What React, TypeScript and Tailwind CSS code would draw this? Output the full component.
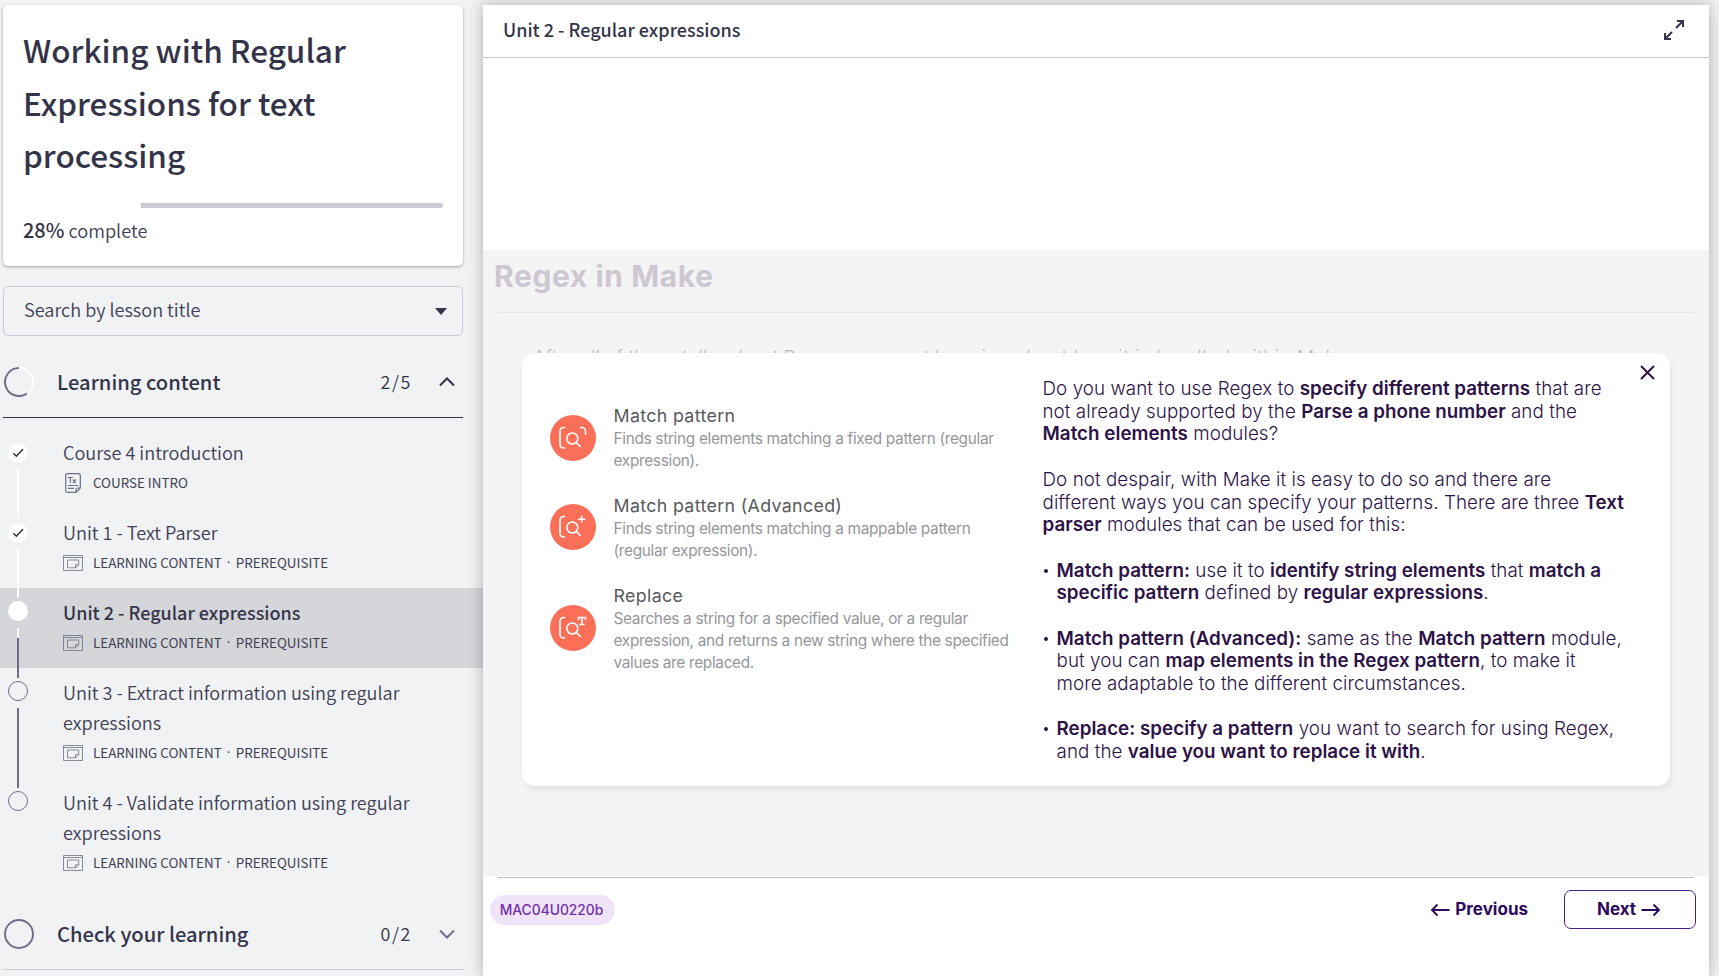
import React from "react";

const cjk = "font-['Noto_Sans_CJK_SC',sans-serif]";

function WindowIcon() {
  return (
    <svg className="block h-4 w-5" viewBox="0 0 20 16" fill="none" stroke="#6d7086" strokeWidth="1">
      <path d="M.5.5h19v15H.5zM.5 2.5h19M4.500 5h11.200v4.800l-3 3H4.500zM12.500 12.800v-3h3" opacity=".8" />
    </svg>
  );
}

function TextDocIcon() {
  return (
    <svg className="block h-5 w-5" viewBox="0 0 20 20" fill="none" stroke="#6d7086" strokeWidth="1.200">
      <path d="M13 19.300H4.200a1.500 1.500 0 0 1-1.500-1.500V2.200A1.500 1.500 0 0 1 4.200.700h11.600a1.500 1.500 0 0 1 1.500 1.500V15zM13 19.300v-2.800q0-1.500 1.500-1.500h2.800M5 12.500h10M5 15.300h6M4.800 4.500h5M7.300 4.500v5.500M9.800 6.500l3 3.500M12.800 6.500l-3 3.500" />
    </svg>
  );
}

function CheckDot() {
  return (
    <div className="flex h-5 w-5 items-center justify-center rounded-full bg-white">
      <svg className="h-3 w-3" viewBox="0 0 12 12" fill="none" stroke="#2f2f38" strokeWidth="1.500">
        <path d="M1.300 6.300l3 3L11 2.300" />
      </svg>
    </div>
  );
}

function Chevron({ up = false }: { up?: boolean }) {
  return (
    <svg className="h-5 w-5" viewBox="0 0 20 20" fill="none" stroke={up ? "#33344a" : "#6d7086"} strokeWidth="2">
      <path d={up ? "M3 13.500l7-7 7 7" : "M3 6.500l7 7 7-7"} />
    </svg>
  );
}

type LessonProps = {
  title: React.ReactNode;
  kind: string[];
  icon?: React.ReactNode;
  marker: React.ReactNode;
  active?: boolean;
  tall?: boolean;
};

function Lesson({ title, kind, icon, marker, active, tall }: LessonProps) {
  return (
    <div className={`flex w-[483px] shrink-0 ${tall ? "h-[110px]" : "h-20"} ${active ? "bg-[#d5d6da]" : ""}`}>
      <div className="w-[63px] shrink-0 pl-2">{marker}</div>
      <div className="pt-[9px]">
        <div className={`whitespace-nowrap leading-[30px] ${active ? "text-[18px] font-medium text-[#33344a]" : "text-[18.100px] font-[350] text-[#3d3f55]"}`}>{title}</div>
        <div className="flex h-[30px] items-center">
          <div className="w-[30px] pt-px">{icon ?? <WindowIcon />}</div>
          <div className="flex text-[13.400px] leading-[30px] whitespace-nowrap text-[#3d3f55]">
            {kind.map((k, i) => (
              <React.Fragment key={k}>
                {i > 0 && <span className="w-[14px] text-center font-['Noto_Sans',sans-serif]">·</span>}
                <span>{k}</span>
              </React.Fragment>
            ))}
          </div>
        </div>
      </div>
    </div>
  );
}

const prerequisite = ["LEARNING CONTENT", "PREREQUISITE"];

function Sidebar() {
  return (
    <aside className={`flex h-[976px] w-[483px] shrink-0 flex-col overflow-hidden pt-[5px] text-[#33344a] ${cjk}`}>
      <div className="ml-[3px] h-[261px] w-[460px] shrink-0 rounded-[5px] bg-white px-5 pt-[18px] shadow-[0_1px_3px_rgba(0,0,0,0.35)]">
        <h1 className="text-[31.500px] leading-[52.500px] font-medium whitespace-nowrap">
          Working with Regular
          <br />
          Expressions for text
          <br />
          processing
        </h1>
        <div className="mt-[22px] flex h-[5px] w-[420px]">
          <div className="w-[118px]" />
          <div className="flex-1 rounded-r-full bg-[#c9cad5]" />
        </div>
        <div className="mt-[7px] text-[18.200px] leading-[30px] font-[350] text-[#3d3f55]">
          <span className="text-[19.900px] font-medium text-[#33344a]">28%</span> complete
        </div>
      </div>
      <div className="mt-5 ml-[3px] flex h-[50px] w-[460px] shrink-0 items-center justify-between rounded-[5px] border border-[#c9cad5] pr-[15px] pl-5">
        <span className="pb-[3px] text-[18.100px] font-[350] text-[#3d3f55]">Search by lesson title</span>
        <svg className="h-[7px] w-3" viewBox="0 0 12 7" fill="#33344a">
          <path d="M0 0h12L6 7z" />
        </svg>
      </div>
      <div className="ml-[3px] flex h-[82px] w-[460px] shrink-0 items-center border-b border-[#33344a] pt-[10px]">
        <svg className="mr-[23px] ml-px h-[30px] w-[30px]" viewBox="0 0 30 30" fill="none" strokeWidth="2">
          <circle cx="15" cy="15" r="14" stroke="#fff" />
          <path d="M15 1a14 14 0 1 0 8 25.500" stroke="#6d7086" />
        </svg>
        <span className="flex-1 pt-px text-[20.150px] font-medium">Learning content</span>
        <span className="mr-[25px] text-[17.900px] font-[350] tracking-[1.600px]">2/5</span>
        <span className="mr-[6px]"><Chevron up /></span>
      </div>
      <div className="h-[10px] shrink-0" />
      <Lesson
        title="Course 4 introduction"
        kind={["COURSE INTRO"]}
        icon={<TextDocIcon />}
        marker={
          <div className="flex w-5 flex-col items-center pt-[15px]">
            <CheckDot />
            <div className="mt-[5px] h-[50px] w-[2px] bg-white" />
          </div>
        }
      />
      <Lesson
        title="Unit 1 - Text Parser"
        kind={prerequisite}
        marker={
          <div className="flex w-5 flex-col items-center pt-[15px]">
            <CheckDot />
            <div className="mt-[5px] h-[40px] w-[2px] bg-white" />
          </div>
        }
      />
      <Lesson
        active
        title="Unit 2 - Regular expressions"
        kind={prerequisite}
        marker={
          <div className="flex w-5 flex-col items-center">
            <div className="h-[10px] w-[2px] bg-white" />
            <div className="mt-[3px] h-5 w-5 shrink-0 rounded-full bg-white" />
            <div className="mt-[7px] h-[10px] w-[2px] bg-white" />
            <div className="h-[30px] w-[2px] bg-[#6d7086]" />
          </div>
        }
      />
      <Lesson
        tall
        title={<>Unit 3 - Extract information using regular<br />expressions</>}
        kind={prerequisite}
        marker={
          <div className="flex w-5 flex-col items-center">
            <div className="h-[10px] w-[2px] bg-[#6d7086]" />
            <div className="mt-[3px] h-5 w-5 shrink-0 rounded-full border border-[#6d7086]" />
            <div className="mt-[7px] h-[80px] w-[2px] bg-[#6d7086]" />
          </div>
        }
      />
      <Lesson
        tall
        title={<>Unit 4 - Validate information using regular<br />expressions</>}
        kind={prerequisite}
        marker={
          <div className="flex w-5 flex-col items-center">
            <div className="h-[10px] w-[2px] bg-[#6d7086]" />
            <div className="mt-[3px] h-5 w-5 shrink-0 rounded-full border border-[#6d7086]" />
          </div>
        }
      />
      <div className="ml-[3px] flex h-[82px] w-[460px] shrink-0 items-center border-b border-[#c9cad5] pt-[10px]">
        <div className="mr-[23px] ml-px h-[30px] w-[30px] rounded-full border-2 border-[#6d7086]" />
        <span className="flex-1 pt-px text-[20.150px] font-medium">Check your learning</span>
        <span className="mr-[25px] text-[17.900px] font-[350] tracking-[1.600px]">0/2</span>
        <span className="mr-[6px]"><Chevron /></span>
      </div>
    </aside>
  );
}

function ModuleIcon({ variant }: { variant: "scan" | "plus" | "text" }) {
  return (
    <svg className="h-[46px] w-[46px] shrink-0" viewBox="0 0 46 46" fill="none" stroke="#fff" strokeWidth="1.600" strokeLinecap="round">
      <circle cx="23" cy="23" r="23" fill="#fb6f58" stroke="none" />
      <path d="M14.500 12.500h-1a3.500 3.500 0 0 0-3.500 3.500v13.500a3.500 3.500 0 0 0 3.500 3.500h1" />
      <circle cx="22.300" cy="23.500" r="5.500" />
      <path d="M26.300 27.500l4 4" />
      {variant === "scan" && <path d="M30.500 12.500h1.500a3.500 3.500 0 0 1 3.500 3.500v3.500" />}
      {variant === "plus" && <path d="M31.700 12.300v6M28.700 15.300h6" />}
      {variant === "text" && <path d="M28.500 14.500v-2h7v2M32 12.500v7M30 19.500h4" />}
    </svg>
  );
}

function Module({ variant, title, lines, pad }: { variant: "scan" | "plus" | "text"; title: string; lines: string[]; pad: string }) {
  return (
    <div className="flex">
      <div className={`w-[64px] shrink-0 ${pad}`}><ModuleIcon variant={variant} /></div>
      <div className="whitespace-nowrap">
        <div className="text-[17.800px] leading-[24px] tracking-[0.350px] text-[#58585c]">{title}</div>
        {lines.map((l) => (
          <div key={l} className="text-[15.400px] leading-[22px] tracking-[-0.320px] text-[#96969a]">{l}</div>
        ))}
      </div>
    </div>
  );
}

function B({ children }: { children: React.ReactNode }) {
  return <b className="font-semibold tracking-[0.020px]">{children}</b>;
}

function Bullet() {
  return (
    <span className="flex h-[22px] w-[14px] items-center pl-px">
      <span className="h-1 w-1 rounded-full bg-[#2d1248]" />
    </span>
  );
}

function ContentCard() {
  return (
    <div className="absolute top-[103px] left-[39px] flex h-[433px] w-[1148px] rounded-[13px] bg-white shadow-[2px_4px_6px_rgba(0,0,0,0.07)]">
      <div className="w-[520.500px] pt-[51px] pl-[27.500px]">
        <Module variant="scan" pad="pt-[11px]" title="Match pattern" lines={["Finds string elements matching a fixed pattern (regular", "expression)."]} />
        <div className="h-[22px]" />
        <Module variant="plus" pad="pt-[10px]" title="Match pattern (Advanced)" lines={["Finds string elements matching a mappable pattern", "(regular expression)."]} />
        <div className="h-[22px]" />
        <Module variant="text" pad="pt-[21px]" title="Replace" lines={["Searches a string for a specified value, or a regular", "expression, and returns a new string where the specified", "values are replaced."]} />
      </div>
      <div className="pt-[25px] text-[18.800px] leading-[22.700px] font-light tracking-[0.070px] whitespace-nowrap text-[#2d1248]">
        <p>
          Do you want to use Regex to <B>specify different patterns</B> that are<br />
          not already supported by the <B>Parse a phone number</B> and the<br />
          <B>Match elements</B> modules?
        </p>
        <p className="mt-[22.700px]">
          Do not despair, with Make it is easy to do so and there are<br />
          different ways you can specify your patterns. There are three <B>Text</B><br />
          <B>parser</B> modules that can be used for this:
        </p>
        <div className="mt-[22.700px] flex">
          <Bullet />
          <p>
            <B>Match pattern:</B> use it to <B>identify string elements</B> that <B>match a</B><br />
            <B>specific pattern</B> defined by <B>regular expressions</B>.
          </p>
        </div>
        <div className="mt-[22.700px] flex">
          <Bullet />
          <p>
            <B>Match pattern (Advanced):</B> same as the <B>Match pattern</B> module,<br />
            but you can <B>map elements in the Regex pattern</B>, to make it<br />
            more adaptable to the different circumstances.
          </p>
        </div>
        <div className="mt-[22.700px] flex">
          <Bullet />
          <p>
            <B>Replace: specify a pattern</B> you want to search for using Regex,<br />
            and the <B>value you want to replace it with</B>.
          </p>
        </div>
      </div>
      <svg className="absolute top-[12px] right-[15px] h-[15px] w-[15px]" viewBox="0 0 15 15" stroke="#2d1248" strokeWidth="2">
        <path d="M1 1l13 13M14 1L1 14" />
      </svg>
    </div>
  );
}

function Arrow({ back = false }: { back?: boolean }) {
  return (
    <svg className="h-[14px] w-5" viewBox="0 0 20 14" fill="none" stroke="#2d0a5e" strokeWidth="1.900">
      <path d={back ? "M19.500 7H2M7.500 1.500L2 7l5.500 5.500" : "M.5 7H18M12.500 1.500L18 7l-5.500 5.500"} />
    </svg>
  );
}

export default function App() {
  return (
    <div className="flex h-[976px] w-[1719px] overflow-hidden bg-[#f1f2f4]">
      <Sidebar />
      <main className="mt-[5px] h-[971px] w-[1226px] shrink-0 bg-white font-['Inter',sans-serif] shadow-[0_0_14px_rgba(0,0,0,0.28)]">
        <header className={`flex h-[53px] items-center justify-between border-b border-[#c9cad5] pr-[24px] pb-[2px] pl-5 ${cjk}`}>
          <span className="pb-px text-[18px] font-medium text-[#33344a]">Unit 2 - Regular expressions</span>
          <svg className="h-[22px] w-[22px]" viewBox="0 0 22 22" fill="none" stroke="#33344a" strokeWidth="2">
            <path d="M14 2h6v6M20 2l-7 7M8 20H2v-6M2 20l7-7" />
          </svg>
        </header>
        <div className="h-[192px]" />
        <section className="relative h-[626px] bg-[#f4f4f4]">
          <div className="mr-[16px] ml-[14px] h-[63px] border-b border-[#e6e6e9]">
            <h2 className="-ml-[3px] text-[30px] leading-[52px] font-bold tracking-[0.600px] whitespace-nowrap text-[#cdc7d2]">Regex in Make</h2>
          </div>
          <p className="pt-[33px] pl-[50px] text-[18.800px] leading-[24px] font-light tracking-[0.090px] whitespace-nowrap text-[#b9b9c0]">
            After all of these talks about Regex, you want <span className="tracking-[0.550px]">learning about how it is handled within Make.</span>
          </p>
          <ContentCard />
        </section>
        <footer className="mr-[13px] ml-[7px] pt-px">
          <div className="mr-[2px] ml-[7px] h-px bg-[#c5bcc4]" />
          <div className="flex items-center pt-[12px]">
            <span className="flex h-[30px] w-[125px] items-center justify-center rounded-full bg-[#f0e4fb] pt-px pr-[2px] text-[13.800px] font-medium text-[#7230a8]">MAC04U0220b</span>
            <span className="flex-1" />
            <span className="mr-[36px] flex items-center gap-[5px] text-[17px] font-bold text-[#2d0a5e]"><Arrow back />Previous</span>
            <span className="flex h-[39px] w-[132px] items-center justify-center gap-[5px] rounded-[7px] border border-[#4b1c80] pr-[2px] text-[17px] font-bold text-[#2d0a5e]">Next<Arrow /></span>
          </div>
        </footer>
      </main>
    </div>
  );
}
